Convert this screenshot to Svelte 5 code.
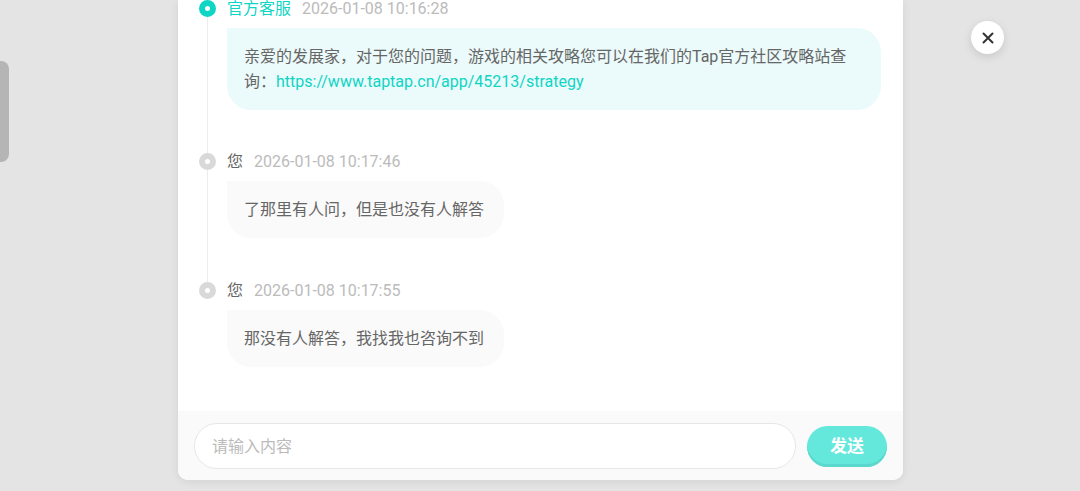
<script lang="ts">
    let draft = $state('');

    const messages = [
        {
            author: '官方客服',
            time: '2026-01-08 10:16:28',
            official: true,
            text: '亲爱的发展家，对于您的问题，游戏的相关攻略您可以在我们的Tap官方社区攻略站查询：',
            link: 'https://www.taptap.cn/app/45213/strategy'
        },
        { author: '您', time: '2026-01-08 10:17:46', text: '了那里有人问，但是也没有人解答' },
        { author: '您', time: '2026-01-08 10:17:55', text: '那没有人解答，我找我也咨询不到' }
    ];
</script>

<div class="page">
    <div class="side">
        <div class="handle"></div>
    </div>

    <main class="dialog">
        <div class="messages">
            {#each messages as message}
                <article class="message" class:official={message.official}>
                    <div class="rail"><span class="dot"></span></div>
                    <div class="content">
                        <header>
                            <span class="author">{message.author}</span>
                            <time>{message.time}</time>
                        </header>
                        <p class="bubble">{message.text}{#if message.link}<a href={message.link}>{message.link}</a>{/if}</p>
                    </div>
                </article>
            {/each}
        </div>

        <form class="composer" onsubmit={(e) => e.preventDefault()}>
            <input type="text" placeholder="请输入内容" aria-label="请输入内容" bind:value={draft}>
            <button type="submit">发送</button>
        </form>
    </main>

    <div class="side">
        <button class="close" type="button" aria-label="关闭">
            <svg viewBox="0 0 12 12" width="12" height="12">
                <path d="M1.5 1.5 L10.5 10.5 M10.5 1.5 L1.5 10.5" />
            </svg>
        </button>
    </div>
</div>

<style>
    :global(body) {
        margin: 0;
        background: #e4e4e4;
    }
    .page, .page * {
        box-sizing: border-box;
    }
    .page {
        display: grid;
        grid-template-columns: 178px minmax(0, 1fr) 177px;
        height: 100vh;
        padding-bottom: 11px;
        background: #e4e4e4;
        color: #666;
        font-family: Roboto, "Noto Sans CJK SC", sans-serif;
        font-size: 16px;
        line-height: 24px;
    }
    .handle {
        width: 9px;
        height: 101px;
        margin-top: 61px;
        border-radius: 0 8px 8px 0;
        background: #b5b5b5;
    }
    .dialog {
        display: flex;
        flex-direction: column;
        min-height: 0;
        overflow: hidden;
        border-radius: 0 0 10px 10px;
        background: #fff;
        box-shadow: 0 2px 8px rgba(0, 0, 0, 0.08);
    }
    /* newest message stays at the bottom, older ones run off the top */
    .messages {
        display: flex;
        flex: 1;
        flex-direction: column;
        justify-content: flex-end;
        min-height: 0;
        padding: 0 22px 44px 21px;
        overflow: hidden;
    }
    .message {
        display: flex;
        flex-shrink: 0;
        gap: 11px;
    }
    .rail {
        display: flex;
        flex-direction: column;
        align-items: center;
        width: 17px;
    }
    .rail::before,
    .rail::after {
        content: "";
        width: 1px;
        height: 4px;
        background: #ededed;
    }
    .rail::after {
        flex: 1;
    }
    .message:last-child .rail::after {
        background: none;
    }
    .dot {
        width: 17px;
        height: 17px;
        border: 6px solid #d9d9d9;
        border-radius: 50%;
        background: #fff;
    }
    .official .dot {
        border-color: #0fd5c5;
    }
    .content {
        flex: 1;
        min-width: 0;
        padding-bottom: 40px;
    }
    .official .content {
        padding-bottom: 39px;
    }
    .message:last-child .content {
        padding-bottom: 0;
    }
    header {
        display: flex;
        gap: 11px;
        margin-bottom: 6px;
        line-height: 26px;
    }
    .official .author {
        color: #0fd5c5;
    }
    time {
        color: #bbb;
    }
    .bubble {
        width: fit-content;
        margin: 0;
        padding: 16px 20px 16px 17px;
        border-radius: 0 24px 24px 24px;
        background: #fafafa;
        line-height: 25px;
    }
    .official .bubble {
        background: #ebfafa;
    }
    .bubble a {
        color: #0fd5c5;
        text-decoration: none;
    }
    .composer {
        display: flex;
        align-items: center;
        gap: 11px;
        padding: 12px 16px 11px;
        background: #fafafa;
    }
    .composer input {
        flex: 1;
        min-width: 0;
        height: 46px;
        padding: 0 17px;
        border: 1px solid #e6e6e6;
        border-radius: 23px;
        outline: none;
        background: #fff;
        color: #666;
        font: inherit;
    }
    .composer input::placeholder {
        color: #bbb;
        opacity: 1;
    }
    .composer button {
        width: 80px;
        height: 41px;
        padding: 0;
        border: 0;
        border-radius: 21px;
        background: #65e8dc;
        box-shadow: inset 0 -3px 0 #5bd8cd;
        color: #fff;
        font: inherit;
        font-size: 17px;
        font-weight: 700;
    }
    .close {
        display: flex;
        align-items: center;
        justify-content: center;
        width: 33px;
        height: 33px;
        margin: 21px 0 0 68px;
        padding: 0;
        border: 0;
        border-radius: 50%;
        background: #fff;
        box-shadow: 0 3px 10px rgba(0, 0, 0, 0.12);
    }
    .close path {
        fill: none;
        stroke: #333;
        stroke-width: 2;
        stroke-linecap: round;
    }
</style>
